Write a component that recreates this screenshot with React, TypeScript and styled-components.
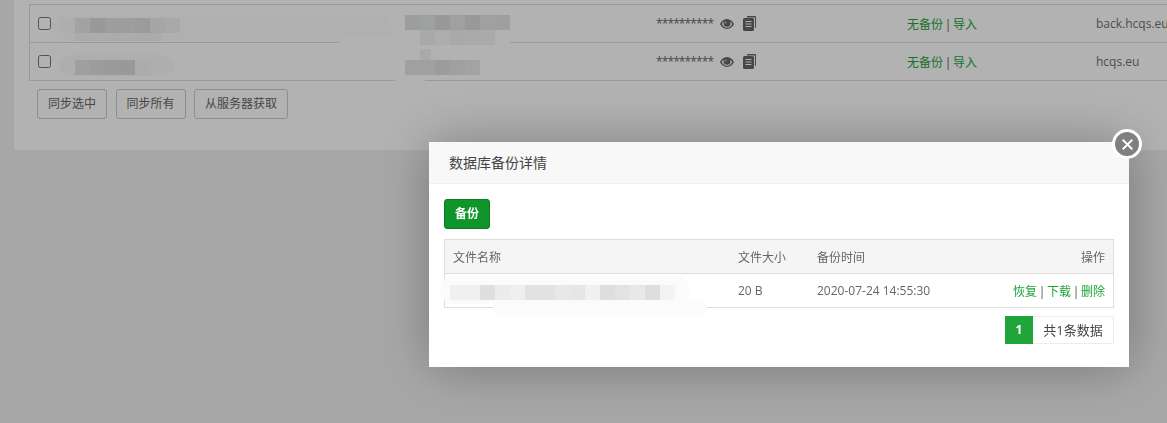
import React from 'react';
import styled, { createGlobalStyle } from 'styled-components';
import { X } from 'lucide-react';

const GlobalStyle = createGlobalStyle`
  html, body {
    margin: 0;
    height: 100%;
    overflow: hidden;
    background: #f0f0f0;
    font-family: "Open Sans", "Noto Sans CJK SC", sans-serif;
    font-size: 12px;
    color: #666;
  }
`;

const Panel = styled.div`
  margin-left: 14px;
  height: 150px;
  box-sizing: border-box;
  padding: 4px 0 0 15px;
  background: #fff;
`;

const SiteTable = styled.div`
  border-top: 1px solid #ddd;
  border-left: 1px solid #ddd;
  margin-bottom: 8px;
`;

const SiteRow = styled.div`
  position: relative;
  display: grid;
  grid-template-columns: 375px 251px 251px 189px minmax(0, 1fr);
  align-items: center;
  height: 37px;
  border-bottom: 1px solid #ddd;
`;

const NameCell = styled.div`
  display: flex;
  align-items: center;
  padding-left: 8px;
`;

const Check = styled.span`
  display: block;
  width: 11px;
  height: 11px;
  border: 1px solid #767676;
  border-radius: 2.5px;
  background: #fff;
`;

const PasswordCell = styled.div`
  display: flex;
  align-items: center;
  color: #666;
`;

const Stars = styled.span`
  width: 64px;
  letter-spacing: -0.9px;
`;

const EyeIcon = styled.svg`
  width: 14px;
  height: 12px;
  flex: none;
`;

const CopyIcon = styled.svg`
  width: 13px;
  height: 15px;
  margin-left: 9px;
  flex: none;
`;

const ActionCell = styled.div`
  color: #555;
`;

const GreenLink = styled.span`
  color: #20a53a;
`;

const Sep = styled.span`
  display: inline-block;
  width: 10px;
  text-align: center;
  color: #555;
`;

const DomainCell = styled.div`
  color: #707070;
  white-space: nowrap;
  overflow: hidden;
`;

const ButtonRow = styled.div`
  display: flex;
  gap: 8.5px;
  margin-left: 8px;
`;

const PlainButton = styled.div`
  height: 28px;
  line-height: 28px;
  padding: 0 10px;
  border: 1px solid #ccc;
  border-radius: 3px;
  background: #fff;
  color: #666;
`;

const Smudge = styled.div<{ $x: number; $y: number; $w: number; $h: number; $color?: string }>`
  position: absolute;
  left: ${p => p.$x}px;
  top: ${p => p.$y}px;
  width: ${p => p.$w}px;
  height: ${p => p.$h}px;
  border-radius: ${p => p.$h / 2}px;
  background: ${p => p.$color || '#fff'};
`;

const Mosaic = styled.div<{ $x: number; $y: number; $cell: number }>`
  position: absolute;
  left: ${p => p.$x}px;
  top: ${p => p.$y}px;
  display: flex;
  height: ${p => p.$cell}px;
`;

const MosaicCell = styled.span<{ $shade: string; $cell: number }>`
  display: block;
  width: ${p => p.$cell}px;
  height: ${p => p.$cell}px;
  background: ${p => p.$shade};
`;

const Overlay = styled.div`
  position: fixed;
  inset: 0;
  background: rgba(0, 0, 0, 0.3);
`;

const Modal = styled.div`
  position: fixed;
  left: 429px;
  top: 142px;
  width: 700px;
  height: 225px;
  background: #fff;
  box-shadow: 1px 1px 50px rgba(0, 0, 0, 0.3);
`;

const ModalTitle = styled.div`
  height: 41px;
  line-height: 41px;
  padding-left: 20px;
  background: #f8f8f8;
  border-bottom: 1px solid #eee;
  color: #444;
  font-size: 14px;
`;

const CloseButton = styled.div`
  position: absolute;
  top: -13px;
  right: -13px;
  width: 24px;
  height: 24px;
  border: 3px solid #fff;
  border-radius: 50%;
  background: #808080;
  color: #fff;
  display: flex;
  align-items: center;
  justify-content: center;
`;

const ModalBody = styled.div`
  position: relative;
  padding: 15px;
`;

const BackupButton = styled.div`
  width: 44px;
  height: 28px;
  line-height: 28px;
  text-align: center;
  border: 1px solid #0e7a23;
  border-radius: 3px;
  background: #10952a;
  color: #fff;
  font-weight: 700;
  margin-bottom: 10px;
`;

const FileTable = styled.div`
  border: 1px solid #ddd;
`;

const FileRow = styled.div<{ $head?: boolean }>`
  display: grid;
  grid-template-columns: 285px 79px 1fr auto;
  align-items: center;
  height: 33px;
  padding: 0 8px;
  background: ${p => (p.$head ? '#f5f5f5' : '#fff')};
  border-bottom: ${p => (p.$head ? '1px solid #ddd' : 'none')};
`;

const RightCell = styled.div`
  text-align: right;
  color: #666;
`;

const Pager = styled.div`
  display: flex;
  justify-content: flex-end;
  margin-top: 8px;
`;

const PageCurrent = styled.span`
  width: 28px;
  height: 28px;
  line-height: 28px;
  text-align: center;
  background: #20a53a;
  color: #fff;
  font-weight: 700;
`;

const PageInfo = styled.span`
  width: 80px;
  height: 26px;
  line-height: 26px;
  text-align: center;
  border: 1px solid #ececec;
  border-left: none;
  color: #444;
  font-size: 13px;
`;

const Eye = () => (
  <EyeIcon viewBox="0 0 14 12">
    <path
      fillRule="evenodd"
      fill="#666"
      d="M7 1C3.800 1 1.300 3.200 0 6c1.300 2.800 3.800 5 7 5s5.700-2.200 7-5c-1.300-2.800-3.800-5-7-5zM7 9.700C4.700 9.700 2.900 8.200 1.700 6c.6-1 1.300-1.900 2.300-2.500-.3.5-.5 1.100-.5 1.700a3.500 3.500 0 0 0 7 0c0-.6-.2-1.200-.5-1.700 1 .6 1.700 1.500 2.300 2.500-1.200 2.200-3 3.700-5.300 3.700z"
    />
    <circle cx="5.600" cy="4.400" r="1" fill="#bbb" />
  </EyeIcon>
);

const Copy = () => (
  <CopyIcon viewBox="0 0 13 15">
    <path fill="#666" d="M4 0h8a1 1 0 0 1 1 1v10a1 1 0 0 1-1 1V1.500H4z" />
    <path
      fillRule="evenodd"
      fill="#666"
      d="M1.500 2h8A1.500 1.500 0 0 1 11 3.500v10A1.500 1.500 0 0 1 9.500 15h-8A1.500 1.500 0 0 1 0 13.500v-10A1.500 1.500 0 0 1 1.500 2zM2.500 5v1h6V5zm0 2.500v1h6v-1zm0 2.500v1h6v-1z"
    />
  </CopyIcon>
);

const Cells = ({ shades, x, y, cell = 15 }: { shades: string[]; x: number; y: number; cell?: number }) => (
  <Mosaic $x={x} $y={y} $cell={cell}>
    {shades.map((s, i) => (
      <MosaicCell key={i} $shade={s} $cell={cell} />
    ))}
  </Mosaic>
);

const Site = ({ domain, children }: { domain: string; children?: React.ReactNode }) => (
  <SiteRow>
    <NameCell>
      <Check />
    </NameCell>
    <div />
    <PasswordCell>
      <Stars>**********</Stars>
      <Eye />
      <Copy />
    </PasswordCell>
    <ActionCell>
      <GreenLink>无备份</GreenLink>
      <Sep>|</Sep>
      <GreenLink>导入</GreenLink>
    </ActionCell>
    <DomainCell>{domain}</DomainCell>
    {children}
  </SiteRow>
);

const App = () => (
  <>
    <GlobalStyle />
    <Panel>
      <SiteTable>
        <Site domain="back.hcqs.eu">
          <Smudge $x={22} $y={10} $w={340} $h={26} $color="#fdfdfd" />
          <Smudge $x={310} $y={32} $w={170} $h={10} />
          <Cells x={30} y={13} cell={15} shades={['#fbf9f6', '#e6e8ea', '#dcdcdc', '#e2e2e2', '#e2e2e2', '#dfdfdf', '#eeeeee', '#f3f3f3']} />
          <Cells x={45} y={28} cell={8} shades={['#f5f5f5', '#f5f5f5', '#f7f7f7', '#f7f7f7', '#f5f5f5', '#f5f5f5', '#f7f7f7', '#f7f7f7', '#f5f5f5', '#f5f5f5', '#f7f7f7']} />
          <Cells x={375} y={10} shades={['#e0e2e2', '#e4e6e6', '#dcdcdc', '#e6e6e6', '#dcdcdc', '#e6e6e6', '#e2e4e4']} />
          <Cells x={390} y={25} shades={['#f3f3f3', '#f8f8f8', '#f2f2f2', '#f4f4f4', '#f4f4f4']} />
        </Site>
        <Site domain="hcqs.eu">
          <Smudge $x={29} $y={12} $w={115} $h={21} $color="#fbfaf9" />
          <Smudge $x={365} $y={32} $w={30} $h={10} />
          <Cells x={45} y={17} shades={['#e3e4e6', '#e0e0e0', '#dedcdc', '#dfdcda', '#f5f6f8']} />
          <Cells x={375} y={17} shades={['#e4e6e6', '#e6e6e6', '#e0e0e0', '#e6e6e6', '#eaeaea']} />
          <Cells x={390} y={6} cell={11} shades={['#f2f2f2']} />
        </Site>
      </SiteTable>
      <ButtonRow>
        <PlainButton>同步选中</PlainButton>
        <PlainButton>同步所有</PlainButton>
        <PlainButton>从服务器获取</PlainButton>
      </ButtonRow>
    </Panel>
    <Overlay />
    <Modal>
      <ModalTitle>数据库备份详情</ModalTitle>
      <CloseButton>
        <X size={17} strokeWidth={2.6} />
      </CloseButton>
      <ModalBody>
        <BackupButton>备份</BackupButton>
        <FileTable>
          <FileRow $head>
            <span>文件名称</span>
            <span>文件大小</span>
            <span>备份时间</span>
            <RightCell>操作</RightCell>
          </FileRow>
          <FileRow>
            <span />
            <span>20 B</span>
            <span>2020-07-24 14:55:30</span>
            <RightCell>
              <GreenLink>恢复</GreenLink>
              <Sep>|</Sep>
              <GreenLink>下载</GreenLink>
              <Sep>|</Sep>
              <GreenLink>删除</GreenLink>
            </RightCell>
          </FileRow>
        </FileTable>
        <Smudge $x={11} $y={92} $w={250} $h={28} $color="#fbfbfb" />
        <Smudge $x={64} $y={116} $w={214} $h={16} $color="#fbfbfb" />
        <Cells x={21} y={101} shades={['#f0f0f0', '#f0f0f0', '#dfdfdf', '#ececec', '#efefef', '#e2e2e2', '#e2e2e2', '#e8e8e8', '#e6e6e6', '#f0f0f0', '#dedede', '#e3e3e3', '#e8e8e8', '#dedede', '#f3f3f3']} />
        <Pager>
          <PageCurrent>1</PageCurrent>
          <PageInfo>共1条数据</PageInfo>
        </Pager>
      </ModalBody>
    </Modal>
  </>
);

export default App;
